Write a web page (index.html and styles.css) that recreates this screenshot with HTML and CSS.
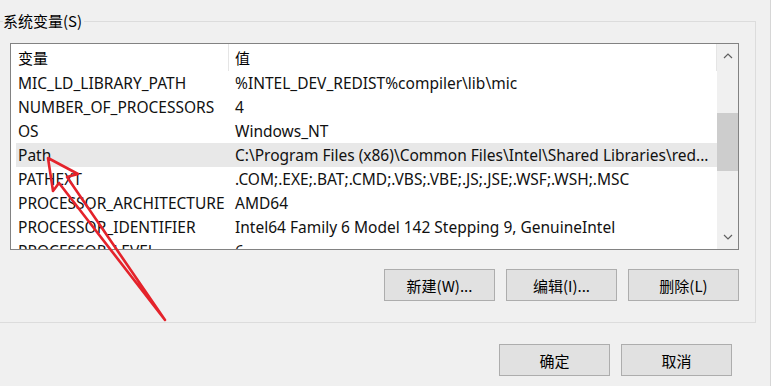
FILE: index.html
```html
<!DOCTYPE html>
<html lang="zh-CN">
<head>
<meta charset="utf-8">
<title>系统变量</title>
<link rel="stylesheet" href="styles.css">
</head>
<body>
<div class="page">
  <div class="group">
    <div class="legend"><span class="legend-text">系统变量(S)</span></div>
    <div class="listview">
      <div class="list-main">
        <div class="list-head">
          <div class="hcell c1">变量</div>
          <div class="hcell c2">值</div>
        </div>
        <div class="row"><div class="cell c1">MIC_LD_LIBRARY_PATH</div><div class="cell c2">%INTEL_DEV_REDIST%compiler\lib\mic</div></div>
        <div class="row"><div class="cell c1">NUMBER_OF_PROCESSORS</div><div class="cell c2">4</div></div>
        <div class="row"><div class="cell c1">OS</div><div class="cell c2">Windows_NT</div></div>
        <div class="row selected"><div class="cell c1">Path</div><div class="cell c2">C:\Program Files (x86)\Common Files\Intel\Shared Libraries\red...</div></div>
        <div class="row"><div class="cell c1">PATHEXT</div><div class="cell c2">.COM;.EXE;.BAT;.CMD;.VBS;.VBE;.JS;.JSE;.WSF;.WSH;.MSC</div></div>
        <div class="row"><div class="cell c1">PROCESSOR_ARCHITECTURE</div><div class="cell c2">AMD64</div></div>
        <div class="row"><div class="cell c1">PROCESSOR_IDENTIFIER</div><div class="cell c2">Intel64 Family 6 Model 142 Stepping 9, GenuineIntel</div></div>
        <div class="row"><div class="cell c1">PROCESSOR_LEVEL</div><div class="cell c2">6</div></div>
      </div>
      <div class="scrollbar">
        <div class="sb-btn"><svg width="10" height="6" viewBox="0 0 10 6"><path d="M1 5 L5 1 L9 5" fill="none" stroke="#606060" stroke-width="1.2"/></svg></div>
        <div class="sb-track">
          <div class="sb-thumb"></div>
        </div>
        <div class="sb-btn"><svg width="10" height="6" viewBox="0 0 10 6"><path d="M1 1 L5 5 L9 1" fill="none" stroke="#606060" stroke-width="1.2"/></svg></div>
      </div>
    </div>
    <div class="group-buttons">
      <button class="btn">新建(W)...</button>
      <button class="btn">编辑(I)...</button>
      <button class="btn">删除(L)</button>
    </div>
  </div>
  <div class="footer">
    <button class="btn">确定</button>
    <button class="btn">取消</button>
  </div>
  <svg class="annotation" width="771" height="386" viewBox="0 0 771 386">
    <polygon points="48,158 78,174 67,177 165,320 59,183 53,191" fill="none" stroke="#e4232b" stroke-width="2.6" stroke-linejoin="round"/>
  </svg>
</div>
</body>
</html>
```
FILE: styles.css
```css
html, body {
  margin: 0;
  padding: 0;
  background: #f0f0f0;
}
.page {
  position: relative;
  box-sizing: border-box;
  width: 771px;
  height: 386px;
  overflow: hidden;
  border-right: 1px solid #d6d6d6;
  font-family: "Noto Sans", "Noto Sans CJK SC", sans-serif;
  font-size: 15.5px;
  color: #000;
}
.group {
  box-sizing: border-box;
  width: 756px;
  height: 302px;
  margin-top: 21px;
  border-top: 1px solid #dcdcdc;
  border-right: 1px solid #dcdcdc;
  border-bottom: 1px solid #dcdcdc;
}
.legend {
  display: flex;
  height: 16px;
  margin-top: -9px;
  align-items: center;
}
.legend-text {
  margin-left: 3px;
  padding-right: 2px;
  background: #f0f0f0;
  font-family: "Noto Sans CJK SC", sans-serif;
  font-size: 15px;
  line-height: 16px;
  color: #000;
}
.listview {
  box-sizing: border-box;
  display: flex;
  width: 729px;
  height: 207px;
  margin: 14px 0 0 10px;
  border: 1px solid #828282;
  background: #fff;
}
.list-main {
  flex: 1;
  overflow: hidden;
  padding-left: 5px;
}
.list-head {
  display: grid;
  grid-template-columns: 213px 1fr;
  height: 27px;
}
.hcell {
  box-sizing: border-box;
  font-family: "Noto Sans CJK SC", sans-serif;
  font-size: 15px;
  line-height: 27px;
  border-right: 1px solid #e5e5e5;
  white-space: nowrap;
}
.hcell.c1 { padding-left: 2px; }
.hcell.c2 { padding-left: 6px; }
.row {
  display: grid;
  grid-template-columns: 213px 1fr;
  height: 24px;
  line-height: 24px;
  white-space: nowrap;
  color: #111;
}
.row.selected { background: #e8e8e8; }
.cell { overflow: hidden; }
.cell.c1 { padding-left: 2px; }
.cell.c2 { padding-left: 6px; }
.scrollbar {
  width: 21px;
  display: flex;
  flex-direction: column;
  background: #f0f0f0;
}
.sb-btn {
  height: 24px;
  display: flex;
  align-items: center;
  justify-content: center;
}
.sb-track {
  flex: 1;
  padding-top: 45px;
}
.sb-thumb {
  height: 58px;
  background: #cdcdcd;
}
.group-buttons {
  display: flex;
  justify-content: flex-end;
  gap: 11px;
  margin-top: 19px;
  padding-right: 16px;
}
.btn {
  box-sizing: border-box;
  width: 111px;
  height: 32px;
  margin: 0;
  padding: 0;
  background: #e1e1e1;
  border: 1px solid #adadad;
  font-family: "Noto Sans CJK SC", sans-serif;
  font-size: 15px;
  color: #000;
}
.footer {
  display: flex;
  justify-content: flex-end;
  gap: 11px;
  margin-top: 21px;
  padding-right: 38px;
}
.annotation {
  position: absolute;
  left: 0;
  top: 0;
  pointer-events: none;
}
```
